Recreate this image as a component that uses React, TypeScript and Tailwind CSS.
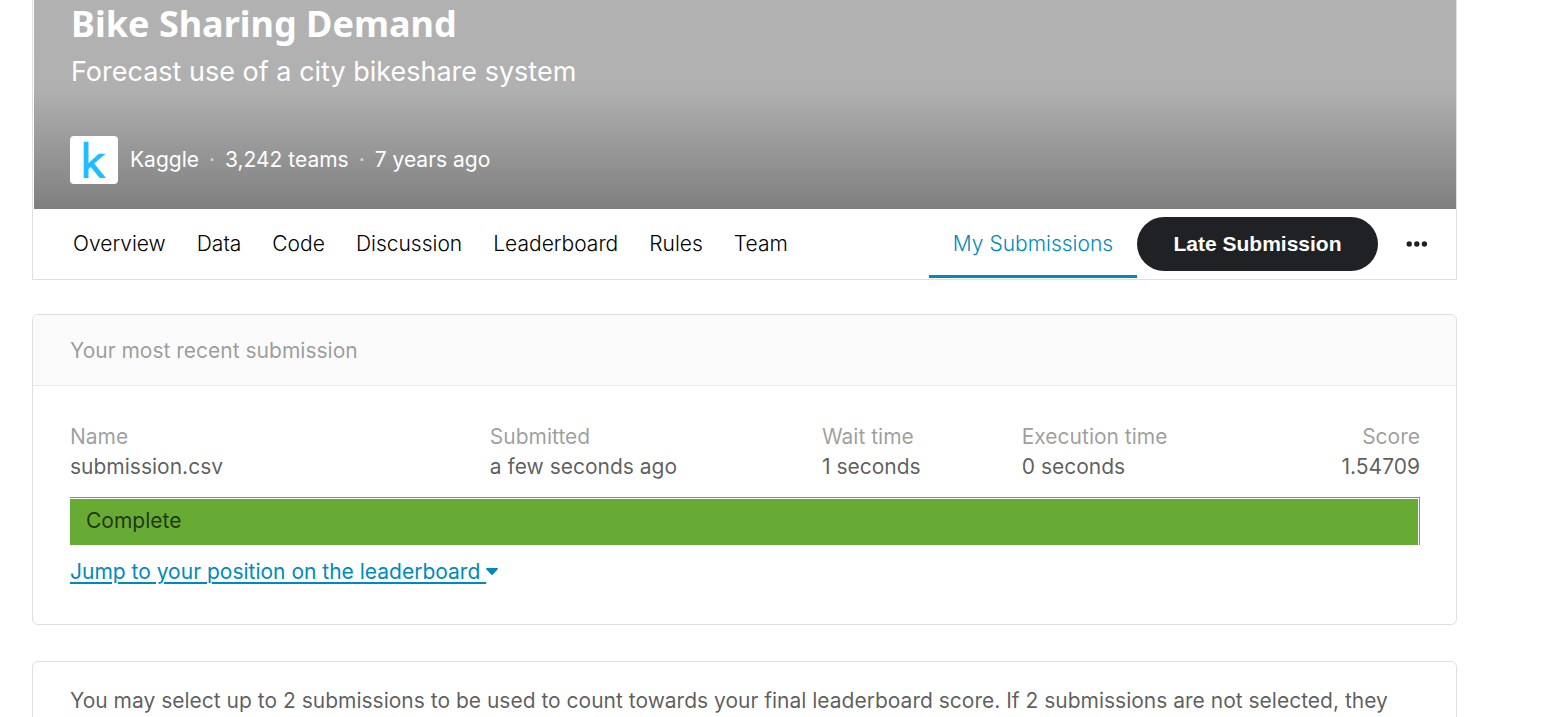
import { Fragment } from "react";

const tabs = ["Overview", "Data", "Code", "Discussion", "Leaderboard", "Rules", "Team"];

const facts = ["Kaggle", "3,242 teams", "7 years ago"];

function KaggleLogo() {
  return (
    <svg viewBox="0 0 48 48" className="size-12 shrink-0 rounded bg-white" role="img" aria-label="Kaggle">
      <path
        fill="#20beff"
        d="M13.7 6.2c0-.3.2-.5.5-.5h3.8c.3 0 .5.2.5.5v21.1l9.6-9.1c.3-.3.6-.4.9-.4h5.4c.6 0 .7.5.4.8L24.2 27.6l11.2 13.7c.3.4.1.8-.4.8h-4.8c-.5 0-.8-.2-1-.5l-8.4-10.6-2.3 2.1v8.4c0 .4-.2.6-.5.6h-3.8c-.3 0-.5-.2-.5-.6z"
      />
    </svg>
  );
}

function Header() {
  return (
    <header className="border-x border-b border-[#dedfe0]">
      <div className="ml-px bg-[linear-gradient(to_bottom,#b2b2b2_0%,#b0b0b0_43%,#7f7f7f_100%)] px-9 pb-[25px] text-white">
        <h1 className="px-px font-['Noto_Sans',sans-serif] text-[36px] leading-[48px] font-bold">Bike Sharing Demand</h1>
        <p className="px-px pt-[2px] text-[27px] leading-[44px]">Forecast use of a city bikeshare system</p>
        <div className="flex items-center gap-3 pt-[42px] text-[21px] leading-6">
          <KaggleLogo />
          <p className="flex items-center">
            {facts.map((fact, i) => (
              <Fragment key={fact}>
                {i > 0 && <span className="w-[26px] text-center text-[#d6d6d6]">·</span>}
                <span>{fact}</span>
              </Fragment>
            ))}
          </p>
        </div>
      </div>
      <div className="flex h-[70px] items-center justify-between pr-7 pl-10">
        <nav className="flex gap-[31px] text-[21px] font-light text-black">
          {tabs.map((tab) => (
            <a key={tab} href="#">
              {tab}
            </a>
          ))}
        </nav>
        <div className="flex items-center">
          <a
            href="#"
            className="mt-[-1px] flex h-[68px] w-[208px] items-center justify-center border-y-3 border-t-transparent border-b-[#008abc] text-[21px] font-light text-[#008abc]"
          >
            My Submissions
          </a>
          <button className="h-[54px] w-[241px] rounded-full bg-[#202124] font-['Liberation_Sans',sans-serif] text-[21px] font-bold text-white">
            Late Submission
          </button>
          <button aria-label="More options" className="ml-7">
            <svg viewBox="0 0 22 8" className="h-2 w-[22px]" fill="#202124">
              <circle cx="3.2" cy="4" r="2.7" />
              <circle cx="10.8" cy="4" r="2.7" />
              <circle cx="18.4" cy="4" r="2.7" />
            </svg>
          </button>
        </div>
      </div>
    </header>
  );
}

function RecentSubmission() {
  return (
    <section className="mt-[34px] overflow-hidden rounded-md border border-[#dedfe0] text-[21px]">
      <h2 className="flex h-[71px] items-center border-b border-[#e8e8e8] bg-[#fbfbfb] px-[37px] pt-px text-black/40">
        Your most recent submission
      </h2>
      <div className="pt-9 pr-9 pb-[37px] pl-[37px]">
        <table className="w-full table-fixed text-left leading-[30px]">
          <colgroup>
            <col className="w-[31.1%]" />
            <col className="w-[24.6%]" />
            <col className="w-[14.8%]" />
            <col className="w-[18%]" />
            <col />
          </colgroup>
          <thead>
            <tr className="text-black/40">
              <th className="font-normal">Name</th>
              <th className="font-normal">Submitted</th>
              <th className="font-normal">Wait time</th>
              <th className="font-normal">Execution time</th>
              <th className="text-right font-normal">Score</th>
            </tr>
          </thead>
          <tbody>
            <tr className="text-black/65">
              <td>submission.csv</td>
              <td>a few seconds ago</td>
              <td>1 seconds</td>
              <td>0 seconds</td>
              <td className="text-right">1.54709</td>
            </tr>
          </tbody>
        </table>
        <div className="mt-[15px] border-t border-r border-[#68ab34] pt-px pr-px">
          <p className="flex h-[46px] items-center bg-[#68ab34] px-4 pb-[2px] text-black/70">Complete</p>
        </div>
        <a href="#" className="mt-3 flex w-fit items-center leading-[30px] text-[#008abc]">
          <span className="whitespace-pre underline decoration-2 underline-offset-3">{"Jump to your position on the leaderboard "}</span>
          <svg viewBox="0 0 12 8" className="h-2 w-3" fill="#008abc">
            <path d="M.8 0h10.4c.7 0 1 .8.5 1.3L6.9 6.6c-.5.6-1.3.6-1.8 0L.3 1.3C-.2.8.1 0 .8 0z" />
          </svg>
        </a>
      </div>
    </section>
  );
}

export default function App() {
  return (
    <div className="h-screen overflow-hidden bg-white font-[Inter,sans-serif]">
      <main className="mr-[103px] ml-8">
        <Header />
        <RecentSubmission />
        <section className="mt-9 rounded-md border border-[#dedfe0] px-[37px] py-6 text-[21px] leading-[30px] text-black/65">
          <p>
            You may select up to 2 submissions to be used to count towards your final leaderboard score. If 2 submissions are not selected, they
          </p>
        </section>
      </main>
    </div>
  );
}
